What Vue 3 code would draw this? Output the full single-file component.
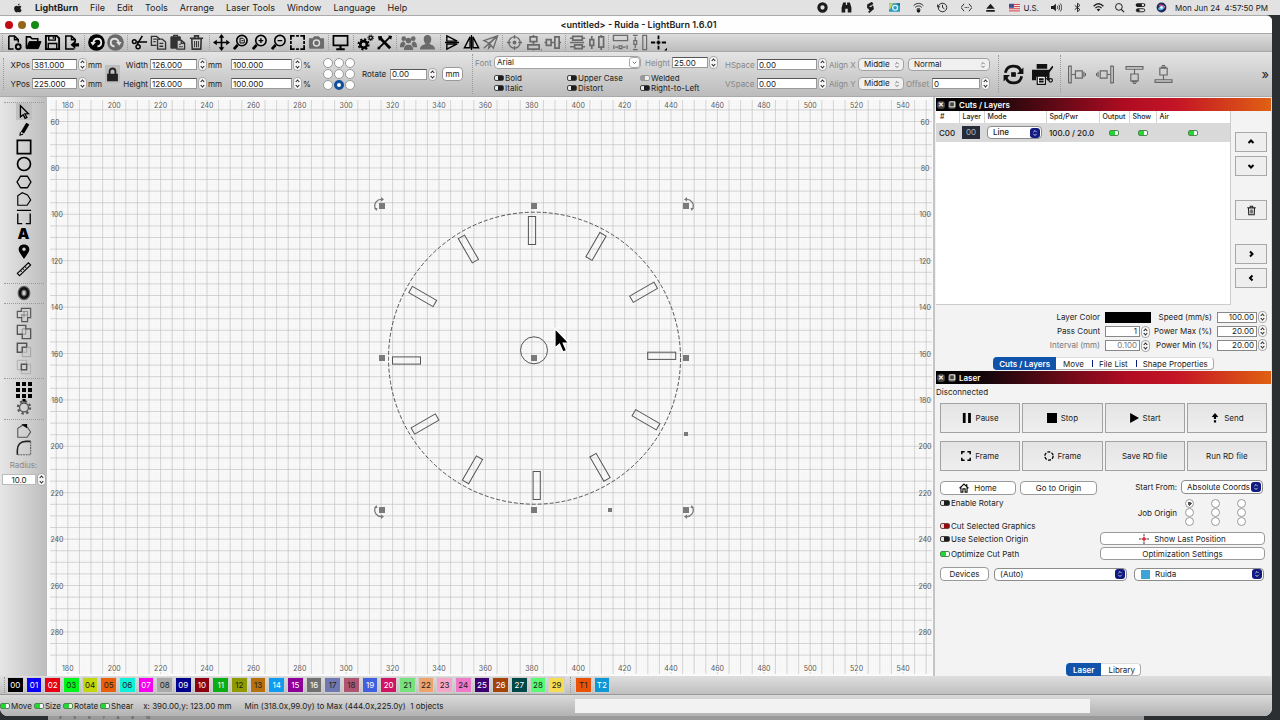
<script setup>
import { ref } from 'vue'

const menus = ['File', 'Edit', 'Tools', 'Arrange', 'Laser Tools', 'Window', 'Language', 'Help']

const icons = {
  newFile: '<path d="M3 2h6l4 4v3M3 2v14h5M9 2v4h4" stroke-width="1.6"/><circle cx="13" cy="13.5" r="2.6" stroke-width="2"/>',
  open: '<path d="M1.5 15V3h4l2 2h6v3" stroke-width="1.7"/><path d="M1.5 15.5 4.5 8H17l-3 7.500z" fill="currentColor"/>',
  save: '<path d="M2 2h11.500l2.500 2.500V16H2z" stroke-width="2"/><path d="M5 2v4.500h7V2M4.500 16v-6h9v6" stroke-width="1.500"/><path d="M10 3v2" stroke-width="1.500"/>',
  exportFile: '<path d="M12 16H3V2h6l4 4v3M9 2v4h4" stroke-width="1.6"/><path d="M17 9.800h-4V7l-5 4.500 5 4.500v-2.800h4z" fill="currentColor" stroke="none"/>',
  undo: '<circle cx="9" cy="9" r="8.800" fill="currentColor" stroke="none"/><path d="M5.500 9.500c.5-3 2.200-4.500 4.500-4.500 2.400 0 4 1.800 4 4s-1.500 4-4 4" stroke="#e6e6e6" stroke-width="2"/><path d="M2.500 8.500h6L5 12.500z" fill="#e6e6e6" stroke="none"/>',
  redo: '<circle cx="9" cy="9" r="8.800" fill="currentColor" stroke="none"/><path d="M12.500 9.500c-.5-3-2.200-4.500-4.500-4.500-2.400 0-4 1.800-4 4s1.500 4 4 4" stroke="#ddd" stroke-width="2"/><path d="M15.500 8.500h-6l3.500 4z" fill="#ddd" stroke="none"/>',
  cut: '<path d="M17 8.500H6M12 2 6.500 11" stroke-width="1.700"/><circle cx="3.500" cy="8" r="2" stroke-width="1.500"/><circle cx="7.500" cy="13.500" r="2.200" stroke-width="1.500"/>',
  copy: '<path d="M7 12H1.500V2.500H7L10 5v1" stroke-width="1.500"/><path d="M8 5.500h5l3.500 3V16H8zM3.500 5.500H7M3.500 8H6M10 10h4M10 13h4" stroke-width="1.400"/>',
  paste: '<path d="M2 3h10v3H8v9H2z" fill="currentColor"/><path d="M5 3V1.500h4V3M8.500 6.500H13l3.500 3V16h-8zM13 6.500v3.500h3.500" stroke-width="1.400"/><path d="M10.500 11h2M10.500 13.500h4" />',
  trash: '<path d="M4 5h10l-.5 11h-9zM2 4.500h14M7 4V2h4v2" stroke-width="1.700"/><path d="M7 7.500v6.500M9 7.500v6.500M11 7.500v6.500" stroke-width="1.100"/>',
  move: '<path d="M9 3v12M3 9h12" stroke-width="1.800"/><path d="M9 0l3 4H6zM9 18l3-4H6zM0 9l4-3v6zM18 9l-4-3v6z" fill="currentColor" stroke="none"/>',
  zoomFit: '<circle cx="10.500" cy="7" r="5.500" stroke-width="1.700"/><path d="M6 11.500 2 16" stroke-width="3"/><path d="M8.500 4.500h3l1.500 1.500v3.500H8.500zM10 7h2"/>',
  zoomIn: '<circle cx="10.500" cy="7" r="5.500" stroke-width="1.700"/><path d="M6 11.500 2 16" stroke-width="3"/><path d="M8 7h5M10.500 4.500v5" stroke-width="1.500"/>',
  zoomOut: '<circle cx="10.500" cy="7" r="5.500" stroke-width="1.700"/><path d="M6 11.500 2 16" stroke-width="3"/><path d="M8 7h5" stroke-width="1.500"/>',
  marquee: '<path d="M2 6V2h4M12 2h4v4M16 12v4h-4M6 16H2v-4M7.500 2h3M7.500 16h3M2 7.500v3M16 7.500v3" stroke-width="1.900"/>',
  camera: '<path d="M1.500 5H5l1.500-2h5L13 5h3.500v10h-15z" fill="currentColor"/><circle cx="9" cy="9.500" r="3.200" stroke="#ddd" stroke-width="1.500"/>',
  monitor: '<path d="M1.500 2h15v10h-15z" stroke-width="1.800"/><path d="M9 12v3M4.500 16.200h9" stroke-width="2.200"/>',
  gears: '<circle cx="7" cy="11" r="3.500" stroke-width="2.800"/><circle cx="7" cy="11" r="5.500" stroke-width="1.800" stroke-dasharray="2.300 2"/><circle cx="14.500" cy="4" r="1.800" stroke-width="1.400"/><circle cx="14.500" cy="4" r="3" stroke-dasharray="1.200 1.100" stroke-width="1"/>',
  tools: '<path d="M4 4l11 11" stroke-width="3"/><path d="M15.500 2.500 3 15" stroke-width="1.900"/><path d="M2 2.500 6 2l1 4-4 1zM13 1.500l4 .5-1 4-2-2zM2 13l3 3-3.500.5z" fill="currentColor" stroke="none"/>',
  group: '<g fill="currentColor" stroke="none"><circle cx="4" cy="5" r="2.500"/><circle cx="14" cy="5" r="2.500"/><circle cx="9" cy="7" r="3"/><path d="M0 13c0-3 1.500-5 4-5l2 2-2 4H0zM18 13c0-3-1.500-5-4-5l-2 2 2 4h4zM4 17c0-4 2-6 5-6s5 2 5 6z"/></g><path d="M6 10c1 1 5 1 6 0" stroke="#ccc" stroke-width=".7"/>',
  user: '<path d="M9 1c3 0 4 2 4 4.500 0 2-1 4-2 5 2 1 6 1.500 6 6H1c0-4.500 4-5 6-6-1-1-2-3-2-5C5 3 6 1 9 1z" fill="currentColor" stroke="none"/>',
  flipV: '<path d="M3 2l11 5.500H3zM3 16l11-5.500H3z" stroke-width="1.500"/><path d="M1 9h15" stroke-width="1.500"/>',
  flipH: '<path d="M7.500 3v11.500H1.500zM10.500 3v11.500h6z" stroke-width="1.500"/><path d="M9 1v16" stroke-width="1.300"/>',
  plane: '<path d="M2 7 16.500 2 12 15 8 10zM8 10l8.500-8M2 15 15 3M8 10l-1 5 2.500-2.500" stroke-width="1.400"/>',
  target: '<circle cx="9" cy="9" r="6" stroke-width="1.400"/><circle cx="9" cy="9" r="2" fill="currentColor" stroke="none"/><path d="M9 1v4M9 13v4M1 9h4M13 9h4" stroke-width="1.400"/>',
  alignV: '<path d="M5.500 3h7v5h-7zM3 11.500h12V16H3zM9 1v2M9 8v3M9 16v1.500" stroke-width="1.800"/><path d="M16 17.500h2v-2z" fill="currentColor" stroke="none"/>',
  alignH: '<path d="M2.500 6h5v6h-5zM11.500 3H16v12h-4.500zM.500 9h2M7.500 9h4M16 9h2" stroke-width="1.800"/>',
  distV: '<path d="M4 2.500h10v4H4zM6 11.500h8v4H6zM1 4.500h3M14 4.500h3M1 9h15M1 13.500h5M14 13.500h3" stroke-width="1.800"/>',
  distH: '<path d="M2 6h4v6H2zM11.500 3h5v11h-5zM4 2v4M4 12v4M14 1v2M14 14v3" stroke-width="1.800"/>',
  sizeW: '<path d="M1.500 1.500h15V7h-15z" stroke-width="1.400"/><path d="M2 12v4M16 12v4M3.500 14h3M11.500 14h3M7.500 12.500h3v3h-3z" stroke-width="1.300"/>',
  sizeH: '<path d="M12.500 1.500h4v15h-4z" stroke-width="1.300"/><path d="M2 1.500h5M2 16.500h5M4.500 3v3.500M4.500 11.500V15M3 7h3v4H3z" stroke-width="1.300"/>',
  cross: '<path d="M9 1.500v4M9 12.500v4M1 9h4.500M12.500 9H17M7 9h4M9 7v4" stroke-width="1.900"/><path d="M15 17.500h3v-3z" fill="currentColor" stroke="none"/>',
  pointer: '<path d="M5 2l9 9-4 .2 2.200 4-2 1-2-4.200L5 14.500z" stroke-width="1.500"/>',
  pencil: '<path d="M11.500 2 15 4 9 14l-3.500-2z" fill="currentColor" stroke="none"/><path d="M5 12.500 4.500 16 8 14.500" stroke-width="1.200"/>',
  rect: '<path d="M1.500 1.500h15v15h-15z" stroke-width="1.900"/>',
  ellipse: '<circle cx="9" cy="9" r="7.300" stroke-width="1.900"/>',
  hexagon: '<path d="M5.200 2.500h7.600l4 6.500-4 6.500H5.200L1.200 9z" stroke-width="1.500"/>',
  polygon: '<path d="M2 16V5.500L7 2l6 2.500L16.500 10l-4 6z" stroke-width="1.300"/>',
  tabs: '<path d="M1 1.500h16M2 5v11.500h5M11 16.500h5V5" stroke-width="1.500"/>',
  pin: '<path d="M9 .5c4 0 6 2.500 6 5.500 0 3.500-3.500 6.500-6 11-2.500-4.500-6-7.500-6-11C3 3 5 .5 9 .5zm0 3.500a2 2 0 1 0 0 4 2 2 0 0 0 0-4z" fill="currentColor" stroke="none"/>',
  ruler: '<path d="M1.500 14 14 2l2.500 2.500L4 16.500zM5 10.500l1.500 1.500M7.500 8.200 9 9.700M10 6l1.500 1.500" stroke-width="1.200"/>',
  offset: '<ellipse cx="9" cy="9" rx="4.500" ry="5.300" stroke-width="5.500" stroke="#666"/><ellipse cx="9" cy="9" rx="4.500" ry="5.300" stroke-width="2.800" stroke="#111"/>',
  union: '<path d="M1.500 5H6V1.500h10.500V12H13v4.500H6.500V12h-5z" stroke-width="1.300"/><path d="M7 5h6v6M6.500 12V8M9 5v7M6 9h7" stroke-width=".6"/>',
  merge: '<path d="M1.500 1.500H11v4h5.500v11H7v-5H1.500z" stroke-width="1.500"/><path d="M7 11.500v-6h4v6z" stroke-width=".6"/>',
  subtract: '<path d="M1.500 1.500H12V6H7v5.500H1.500z" stroke-width="1.700"/><path d="M12 6h4.500v10.500H7v-5h5z" stroke="#999" stroke-width=".9"/>',
  intersect: '<path d="M1.500 1.500h10.500v10.500H1.500zM6 6h10.500v10.500H6z" stroke="#aaa" stroke-width="1"/><path d="M6 6h6v6H6z" stroke-width="1.600"/>',
  gridArray: '<g fill="currentColor" stroke="none"><path d="M0 0h4.500v4.500H0zM6.750 0h4.500v4.500h-4.500zM13.500 0H18v4.500h-4.500zM0 6.750h4.500v4.500H0zM6.750 6.750h4.500v4.500h-4.500zM13.500 6.750H18v4.500h-4.500zM0 13.500h4.500V18H0zM6.750 13.500h4.500V18h-4.500zM13.500 13.500H18V18h-4.500z"/></g>',
  circArray: '<circle cx="9" cy="9.500" r="5" stroke-width="1.500"/><circle cx="9" cy="9.500" r="6.900" stroke-width="2.400" stroke-dasharray="2.600 2.820"/><path d="M9 0v3" stroke="#000" stroke-width="3.500"/>',
  startPoint: '<path d="M2 16V6l5.500-3.500L13 5l3.500 5-4 6z" stroke-width="1.200"/><path d="M6 1.500 12.500 1v5z" fill="#000" stroke="none"/>',
  radiusTool: '<path d="M1.500 16.500v-5c0-6 3.500-10 9.500-10h5.500" stroke-width="1.800" stroke="#222"/><path d="M16.500 2v14.500H2" stroke-width="1.200" stroke-dasharray="2 1"/>',
  lock: '<path d="M2.500 8h13v9h-13z" fill="currentColor" stroke="none"/><path d="M5.500 9V5.500c0-5 7-5 7 0V9" stroke-width="2.200"/>',
  cycle: '<path d="M2 7.500C3.500 0 13.500 0 15.500 6.500M16 10.500c-1.500 7.500-11.500 7.500-13.500 1" stroke-width="2.400"/><path d="M17.500 3v5.500H12zM.500 15V9.500H6z" fill="currentColor" stroke="none"/><path d="M7.500 7.500h3v3h-3z" fill="currentColor"/>',
  printer: '<path d="M4 0h9v4H4zM0 5h15v8h-2v-2H3.500v3H0z" fill="currentColor" stroke="none"/><path d="M4.500 10.500h7v7h-7z" fill="#eee"/><path d="M6 13h4M6 15h4M11 11l7-9M12.500 12l2 2" stroke-width="1.600"/><circle cx="16" cy="14" r="1.500"/>',
  dockL: '<path d="M1.500 1v16M1.500 1H4v16H1.500M8 5.500h6.500v7H8zM4 9h4M16 6.500v5M17.500 7.500v3" stroke-width="1.100"/>',
  dockR: '<path d="M16.500 1v16M16.500 1H14v16h2.500M4 5.500h6.500v7H4zM10 9h4M2 6.500v5M.500 7.500v3" stroke-width="1.100"/>',
  dockT: '<path d="M1 1.500h16V4H1zM5.500 8.500h7V15h-7zM9 4v4.500M6.500 16h5M7.500 17.500h3" stroke-width="1.100"/>',
  dockB: '<path d="M1 16.500h16V14H1zM5.500 3h7v6.500h-7zM9 9.500V14M6.500 2h5M7.500.500h3" stroke-width="1.100"/>',
  chevUp: '<path d="M6.500 10 9 7.500l2.500 2.500" stroke-width="2"/>',
  chevDown: '<path d="M6.500 8 9 10.500 11.500 8" stroke-width="2"/>',
  chevRight: '<path d="M8 6.500 10.500 9 8 11.500" stroke-width="2"/>',
  chevLeft: '<path d="M10.500 6.500 8 9l2.500 2.500" stroke-width="2"/>',
  pause: '<path d="M4 0v18M13.500 0v18" stroke-width="5"/>',
  stop: '<path d="M0 0h18v18H0z" fill="currentColor" stroke="none"/>',
  start: '<path d="M2 0l16 9-16 9z" fill="currentColor" stroke="none"/>',
  send: '<path d="M9 0l6 7H3z" fill="currentColor" stroke="none"/><path d="M9 5v6M9 13v4" stroke-width="4"/>',
  frameSq: '<path d="M1.500 6V1.500h5M11.500 1.500h5V6M16.500 12v4.500h-5M6.500 16.500h-5V12" stroke-width="2.700"/>',
  frameCirc: '<circle cx="9" cy="9" r="7.500" stroke-width="2.400" stroke-dasharray="5.500 2.350"/>',
  home: '<path d="M1 9.500 9 2l8 7.500M3.500 8v8.500h3.500v-6h4v6h3.500V8M14 2v4" stroke-width="2"/>',
  crosshair: '<path d="M9 0v4M9 14v4M0 9h4M14 9h4" stroke-width="1.500"/><path d="M9 5v8M5 9h8" stroke="#e0102a" stroke-width="2.500"/>',
  arrows: '<path d="M6 7.500 9 4.500l3 3M6 10.500l3 3 3-3" stroke-width="1.400"/>',
  drop: '<path d="M5.500 7.500 9 11l3.500-3.500" stroke-width="1.700"/>',
  apple: '<path d="M12 1c0 2-1.500 3.500-3.200 3.500C8.600 2.800 10.200 1.200 12 1zM6.200 5c1.200 0 1.800.8 2.900.8S11 5 12.200 5c1.200 0 2.300.7 3 1.700-2.600 1.600-2.200 5 .4 6.200-.8 2-2.200 4.100-3.600 4.100-1.100 0-1.500-.7-2.800-.7s-1.800.7-2.900.7C4.200 17 2 12.800 2 9.800 2 6.800 4 5 6.200 5z" fill="currentColor" stroke="none"/>',
  record: '<circle cx="9" cy="9" r="6" stroke-width="5"/>',
  binoculars: '<path d="M1 17V9L3.500 1H8v4h2V1h4.500L17 9v8h-6v-6H7v6z" fill="currentColor" stroke="none"/>',
  bolt: '<path d="M12 1 5 5v4l5 1-4 2M12 6l1 5-7 6M13 2 6 6" stroke-width="3"/>',
  photo: '<path d="M0 2h18v14H0z" fill="#2a9bc0" stroke="none"/><path d="M0 2h7L2 12H0z" fill="#b8d56a" stroke="none"/><circle cx="10" cy="9.500" r="4" stroke="#e8f5fa" stroke-width="2"/><path d="M12 2h6v4z" fill="#235f91" stroke="none"/>',
  wifiDot: '<path d="M1 6c5-5 11-5 16 0M3.500 9c3-3.500 8-3.500 11 0M6 12c1.500-2 4.500-2 6 0" stroke-width="1.500"/><circle cx="9" cy="14.500" r="3" fill="currentColor" stroke="none"/>',
  clock: '<circle cx="9" cy="9" r="7" stroke-width="1.500"/><path d="M9 4.500V9l3 2M1 4v4h4" stroke-width="1.500"/>',
  code: '<path d="M5 3 0 9l5 6M13 3l5 6-5 6M6 9h1.500M8.500 9H10M11 9h1.500" stroke-width="1.500"/>',
  eject: '<path d="M9 3l7 8H2zM2 13h14v3H2z" fill="currentColor" stroke="none"/>',
  flag: '<path d="M0 3h18v12H0z" fill="#f1e4e4" stroke="none"/><path d="M0 4h18M0 7.500h18M0 11h18M0 14.500h18" stroke="#d33f49" stroke-width="1.600"/><path d="M0 3h8v6.500H0z" fill="#3b4c8f" stroke="none"/>',
  volume: '<path d="M0 6.500h3.500L8 3v12l-4.500-3.500H0z" fill="currentColor" stroke="none"/><path d="M10 6.500c1.200 1.500 1.200 3.500 0 5M12.500 4.500c2.300 2.500 2.300 6.500 0 9M15 2.500c3.500 4 3.500 9 0 13" stroke-width="1.500"/>',
  bluetooth: '<path d="M4.500 5.500l8.500 7L9 16V2l4 3.500-8.500 7" stroke-width="1.500"/>',
  wifi: '<path d="M1 7c5-5 11-5 16 0M4 10c3-3 7-3 10 0" stroke-width="2.200"/><path d="M6 12c2-1.500 4-1.500 6 0l-3 3.500z" fill="currentColor" stroke="none"/>',
  search: '<circle cx="8" cy="8" r="5.500" stroke-width="1.600"/><path d="M12 12l4.500 4.500" stroke-width="2"/>',
  control: '<rect x="1" y="2" width="16" height="6" rx="3" fill="currentColor" stroke="none"/><rect x="2" y="11" width="14" height="5" rx="2.500" stroke-width="1.500"/><circle cx="13" cy="5" r="2" fill="#ddd" stroke="none"/><circle cx="5" cy="13.500" r="2.500" fill="currentColor" stroke="none"/>',
  siri: '<circle cx="9" cy="9" r="8" fill="#27265c" stroke="none"/><path d="M3 12c3-7 8-8 12-5-2 5-6 8-10 6z" fill="#4fb6dd" stroke="none"/><path d="M5 6c3-2 6-1 9 4" stroke="#e2508e" stroke-width="2"/><circle cx="9" cy="9" r="2" fill="#fff" stroke="none"/>',
}

const toolGroups = [
  [['newFile', 'New'], ['open', 'Open'], ['save', 'Save'], ['exportFile', 'Import']],
  [['undo', 'Undo'], ['redo', 'Redo', 2]],
  [['cut', 'Cut'], ['copy', 'Copy', 1], ['paste', 'Paste', 1], ['trash', 'Delete', 1]],
  [['move', 'Pan'], ['zoomFit', 'Zoom to page'], ['zoomIn', 'Zoom in'], ['zoomOut', 'Zoom out'], ['marquee', 'Frame selection'], ['camera', 'Capture', 2]],
  [['monitor', 'Preview']],
  [['gears', 'Settings'], ['tools', 'Device settings']],
  [['group', 'Group', 2], ['user', 'Ungroup', 2]],
  [['flipV', 'Flip vertically'], ['flipH', 'Flip horizontally'], ['plane', 'Mirror', 2]],
  [['target', 'Center', 2], ['alignV', 'Align vertical centers', 2], ['alignH', 'Align horizontal centers', 2]],
  [['distV', 'Distribute vertically', 2], ['distH', 'Distribute horizontally', 2]],
  [['sizeW', 'Match width', 2], ['sizeH', 'Match height', 2], ['cross', 'Move laser to position']],
]

const sideGroups = [
  [['pointer', 'Select'], ['pencil', 'Draw lines'], ['rect', 'Rectangle'], ['ellipse', 'Ellipse'], ['hexagon', 'Polygon'], ['polygon', 'Edit nodes'], ['tabs', 'Tabs'], ['text', 'Text'], ['pin', 'Position laser'], ['ruler', 'Measure']],
  [['offset', 'Offset']],
  [['union', 'Weld', 1], ['merge', 'Union', 1], ['subtract', 'Subtract', 1], ['intersect', 'Intersect', 1]],
  [['gridArray', 'Grid array'], ['circArray', 'Circular array', 1]],
  [['startPoint', 'Start point', 1], ['radiusTool', 'Radius', 1]],
]

const statusIcons = ['record', 'binoculars', 'bolt', 'photo', 'wifiDot', 'clock', 'code', 'eject']
const systemIcons = ['volume', 'bluetooth', 'wifi', 'search', 'control', 'siri']

const textOpts = ['Bold', 'Upper Case', 'Welded', 'Italic', 'Distort', 'Right-to-Left']

// Workspace scale: 20 mm spans 46.4 units of the drawing.
const step = 11.6
const vLines = Array.from({ length: 76 }, (_, i) => 56.2 + i * step).filter(x => x < 932)
const hLines = Array.from({ length: 48 }, (_, i) => 109.9 + i * step).filter(y => y < 674)
const xLabels = Array.from({ length: 19 }, (_, i) => ({ v: 180 + i * 20, p: 67.8 + i * 46.4 }))
const yLabels = Array.from({ length: 12 }, (_, i) => ({ v: 60 + i * 20, p: 121.5 + i * 46.4 }))

const marks = [
  [532, 230.5, 0], [596, 246.4, 30], [643.6, 292.2, 60], [661.7, 355.8, 90], [646, 419.8, 120], [600, 467.3, 150],
  [536.7, 485.5, 0], [472.5, 469.8, 30], [425, 424, 60], [406.5, 360.5, 90], [422.7, 296.5, 120], [468.4, 249, 150],
]
const handles = [[382, 206], [534, 206], [686, 206], [382, 358], [534, 358], [686, 358], [382, 510], [534, 510], [686, 510]]
const turns = [[382, 206, 1, 1], [686, 206, -1, 1], [382, 510, 1, -1], [686, 510, -1, -1]]

const palette = [
  ['00', '#000', 1], ['01', '#0a00f5', 1], ['02', '#e60012', 1], ['03', '#00f51a', 0], ['04', '#c3d70d', 0], ['05', '#ea5f0a', 0], ['06', '#0ff0d8', 0],
  ['07', '#f500f0', 1], ['08', '#a9a9a9', 0], ['09', '#00008c', 1], ['10', '#8c0010', 1], ['11', '#0aae14', 1], ['12', '#8f9a00', 0], ['13', '#b7700c', 0],
  ['14', '#0f9cf0', 1], ['15', '#8c0098', 1], ['16', '#707070', 1], ['17', '#7078b4', 0], ['18', '#ad5570', 0], ['19', '#4060e0', 1], ['20', '#d01464', 1],
  ['21', '#78e07c', 0], ['22', '#eda36c', 0], ['23', '#f5a5c8', 0], ['24', '#f078c8', 0], ['25', '#3c0070', 1], ['26', '#a54208', 1], ['27', '#004848', 1],
  ['28', '#58fa74', 0], ['29', '#f5dc50', 0],
]
const toolLayers = [['T1', '#ea5208', 0], ['T2', '#0d97d4', 1]]

const anchor = ref(7)
const job = ref(0)
</script>

<template>
  <div class="screen">
    <header class="menubar">
      <nav class="menus">
        <a href="#" class="apple" aria-label="Apple menu"><svg viewBox="0 0 18 18" v-html="icons.apple"></svg></a>
        <a href="#" class="app">LightBurn</a>
        <a v-for="m in menus" :key="m" href="#">{{ m }}</a>
      </nav>
      <div class="status-area">
        <span v-for="n in statusIcons" :key="n" class="st"><svg viewBox="0 0 18 18" v-html="icons[n]"></svg></span>
        <span class="lang"><svg viewBox="0 0 18 18" v-html="icons.flag"></svg>U.S.</span>
        <span v-for="n in systemIcons" :key="n" class="sy"><svg viewBox="0 0 18 18" v-html="icons[n]"></svg></span>
        <span class="clock">Mon Jun 24&nbsp; 4:57:50 PM</span>
      </div>
    </header>

    <main class="window">
      <div class="titlebar">
        <div class="lights">
          <button aria-label="Close" class="red"></button><button aria-label="Minimize" class="amber"></button><button aria-label="Zoom" class="green"></button>
        </div>
        <h1>&lt;untitled&gt; - Ruida - LightBurn 1.6.01</h1>
      </div>

      <div class="toolbar">
        <div v-for="(g, i) in toolGroups" :key="i" class="tgroup">
          <button v-for="t in g" :key="t[0]" :aria-label="t[1]" :class="['tool', t[2] === 2 ? 'dim' : t[2] === 1 ? 'soft' : '']">
            <svg viewBox="0 0 18 18" v-html="icons[t[0]]"></svg>
          </button>
        </div>
      </div>

      <div class="props">
        <div class="pos">
          <label for="xpos">XPos</label><input id="xpos" value="381.000"><i class="step"></i><span>mm</span>
          <label for="ypos">YPos</label><input id="ypos" value="225.000"><i class="step"></i><span>mm</span>
        </div>
        <button class="lock" aria-label="Lock aspect ratio"><svg viewBox="0 0 18 18" v-html="icons.lock"></svg></button>
        <div class="size">
          <label for="w">Width</label><input id="w" value="126.000"><i class="step"></i><span>mm</span><input aria-label="Width percent" value="100.000"><i class="step"></i><span>%</span>
          <label for="h">Height</label><input id="h" value="126.000"><i class="step"></i><span>mm</span><input aria-label="Height percent" value="100.000"><i class="step"></i><span>%</span>
        </div>
        <div class="anchors">
          <input v-for="n in 9" :key="n" v-model="anchor" type="radio" name="anchor" :value="n - 1" :aria-label="'Anchor ' + n">
        </div>
        <div class="rotate">
          <label for="rot">Rotate</label><input id="rot" value="0.00"><i class="step"></i><button class="unit">mm</button>
        </div>
        <div class="font">
          <div class="fontrow">
            <label for="font">Font</label>
            <span class="sel wide"><select id="font"><option>Arial</option></select><svg class="boxed" viewBox="0 0 18 18" v-html="icons.drop"></svg></span>
            <label for="fh">Height</label><input id="fh" value="25.00"><i class="step"></i>
          </div>
          <div class="opts">
            <label v-for="o in textOpts" :key="o"><input type="checkbox" class="tg" :class="{ pale: o === 'Welded' }">{{ o }}</label>
          </div>
        </div>
        <div class="spacing">
          <label for="hs">HSpace</label><input id="hs" value="0.00"><i class="step"></i>
          <label for="ax">Align X</label><span class="sel"><select id="ax"><option>Middle</option></select><svg viewBox="0 0 18 18" v-html="icons.arrows"></svg></span>
          <span class="sel normal"><select aria-label="Text mode"><option>Normal</option></select><svg viewBox="0 0 18 18" v-html="icons.arrows"></svg></span>
          <label for="vs">VSpace</label><input id="vs" value="0.00"><i class="step"></i>
          <label for="ay">Align Y</label><span class="sel"><select id="ay"><option>Middle</option></select><svg viewBox="0 0 18 18" v-html="icons.arrows"></svg></span>
          <span class="offset"><label for="off">Offset</label><input id="off" value="0"><i class="step"></i></span>
        </div>
        <div class="big">
          <button aria-label="Refresh"><svg viewBox="0 0 18 18" v-html="icons.cycle"></svg></button>
          <button aria-label="Print and cut"><svg viewBox="0 0 18 18" v-html="icons.printer"></svg></button>
        </div>
        <div class="big docks">
          <button v-for="d in ['dockL', 'dockR', 'dockT', 'dockB']" :key="d" :aria-label="d"><svg viewBox="0 0 18 18" v-html="icons[d]"></svg></button>
        </div>
        <button class="more" aria-label="More">»</button>
      </div>

      <div class="body">
        <aside class="side">
          <div v-for="(g, i) in sideGroups" :key="i" class="sgroup">
            <button v-for="t in g" :key="t[0]" :aria-label="t[1]" :class="['tool', { soft: t[2], active: t[0] === 'pointer' }]">
              <b v-if="t[0] === 'text'">A</b>
              <svg v-else viewBox="0 0 18 18" v-html="icons[t[0]]"></svg>
            </button>
          </div>
          <label for="radius">Radius:</label>
          <div class="radius"><input id="radius" value="10.0"><i class="step"></i></div>
        </aside>

        <section class="canvas" aria-label="Workspace">
          <svg viewBox="47 97 886 579">
            <defs>
              <pattern id="fine" width="2.32" height="2.32" patternUnits="userSpaceOnUse" x="56.2" y="109.900">
                <path d="M0 0H2.320M0 0V2.320" class="fine" />
              </pattern>
            </defs>
            <rect x="50" y="100" width="882" height="574" fill="url(#fine)" stroke="none" />
            <line v-for="x in vLines" :key="'v' + x" :x1="x" :x2="x" y1="100" y2="674" class="grid" />
            <line v-for="y in hLines" :key="'h' + y" x1="50" x2="932" :y1="y" :y2="y" class="grid" />
            <g class="ticks">
              <g v-for="l in xLabels" :key="'x' + l.v">
                <rect :x="l.p - 6" y="102" width="12" height="7" /><text :x="l.p" y="108">{{ l.v }}</text>
                <rect :x="l.p - 6" y="665" width="12" height="7" /><text :x="l.p" y="671">{{ l.v }}</text>
              </g>
              <g v-for="l in yLabels" :key="'y' + l.v">
                <text :x="l.v < 100 ? 55 : 57" :y="l.p + 3">{{ l.v }}</text>
                <text x="925" :y="l.p + 3">{{ l.v }}</text>
              </g>
            </g>
            <g class="art">
              <circle cx="534.5" cy="358.2" r="146" stroke-dasharray="4 2" />
              <circle cx="534" cy="350.300" r="13.500" />
              <rect v-for="(m, i) in marks" :key="i" :x="m[0] - 3.600" :y="m[1] - 14" width="7.200" height="28" :transform="`rotate(${m[2]} ${m[0]} ${m[1]})`" />
            </g>
            <g class="handles">
              <rect v-for="(p, i) in handles" :key="i" :x="p[0] - 3" :y="p[1] - 3" width="6" height="6" />
              <rect x="684" y="432" width="4" height="4" /><rect x="608" y="508" width="4" height="4" />
              <g v-for="(t, i) in turns" :key="'t' + i" :transform="`translate(${t[0]} ${t[1]}) scale(${t[2]} ${t[3]})`">
                <path d="M-6.500 3C-9-2-5-7 0-6.500" class="turn" /><path d="M-1-9l3 2.500-3 2zM-8 2h3.500l-1 3z" />
              </g>
            </g>
            <path class="cursor" d="M555 328.500v19.500l4.500-4 3.500 8 3.500-1.500-3.300-7.500h5.800z" />
          </svg>
        </section>

        <aside class="dock">
          <section class="panel cuts">
            <h2><button aria-label="Close panel">✕</button><button aria-label="Float panel">❐</button>Cuts / Layers</h2>
            <div class="layers">
              <div class="list">
                <table>
                  <colgroup><col class="c1"><col class="c2"><col class="c3"><col class="c4"><col class="c5"><col class="c6"><col></colgroup>
                  <thead><tr><th>#</th><th>Layer</th><th>Mode</th><th>Spd/Pwr</th><th>Output</th><th>Show</th><th>Air</th></tr></thead>
                  <tbody>
                    <tr>
                      <td>C00</td><td><span class="swatch">00</span></td>
                      <td><span class="sel blue"><select aria-label="Mode"><option>Line</option></select><svg viewBox="0 0 18 18" v-html="icons.arrows"></svg></span></td>
                      <td>100.0 / 20.0</td>
                      <td class="mid"><input type="checkbox" class="tg" checked aria-label="Output"></td>
                      <td class="mid"><input type="checkbox" class="tg" checked aria-label="Show"></td>
                      <td class="air"><input type="checkbox" class="tg" checked aria-label="Air"></td>
                    </tr>
                  </tbody>
                </table>
              </div>
              <div class="order">
                <div><button aria-label="Move up"><svg viewBox="0 0 18 18" v-html="icons.chevUp"></svg></button><button aria-label="Move down"><svg viewBox="0 0 18 18" v-html="icons.chevDown"></svg></button></div>
                <div><button aria-label="Delete layer" class="bin"><svg viewBox="0 0 18 18" v-html="icons.trash"></svg></button></div>
                <div><button aria-label="Next"><svg viewBox="0 0 18 18" v-html="icons.chevRight"></svg></button><button aria-label="Previous"><svg viewBox="0 0 18 18" v-html="icons.chevLeft"></svg></button></div>
              </div>
            </div>
            <div class="params">
              <span>Layer Color</span><button class="color" aria-label="Layer Color"></button>
              <label for="speed">Speed (mm/s)</label><input id="speed" value="100.00"><i class="step"></i>
              <label for="pass">Pass Count</label><span class="spin"><input id="pass" value="1"><i class="step"></i></span>
              <label for="pmax">Power Max (%)</label><input id="pmax" value="20.00"><i class="step"></i>
              <label for="int" class="off">Interval (mm)</label><span class="spin off"><input id="int" value="0.100" disabled><i class="step"></i></span>
              <label for="pmin">Power Min (%)</label><input id="pmin" value="20.00"><i class="step"></i>
            </div>
            <div class="tabs"><button class="on">Cuts / Layers</button><button>Move</button><button class="bar">File List</button><button class="bar">Shape Properties</button></div>
          </section>

          <section class="panel laser">
            <h2><button aria-label="Close panel">✕</button><button aria-label="Float panel">❐</button>Laser</h2>
            <p>Disconnected</p>
            <div class="jobs">
              <button><svg viewBox="0 0 18 18" v-html="icons.pause"></svg>Pause</button>
              <button><svg viewBox="0 0 18 18" v-html="icons.stop"></svg>Stop</button>
              <button><svg viewBox="0 0 18 18" v-html="icons.start"></svg>Start</button>
              <button><svg viewBox="0 0 18 18" v-html="icons.send"></svg>Send</button>
              <button><svg viewBox="0 0 18 18" v-html="icons.frameSq"></svg>Frame</button>
              <button><svg viewBox="0 0 18 18" v-html="icons.frameCirc"></svg>Frame</button>
              <button>Save RD file</button>
              <button>Run RD file</button>
            </div>
            <div class="origin">
              <div class="left">
                <div class="pair"><button class="pill"><svg viewBox="0 0 18 18" v-html="icons.home"></svg>Home</button><button class="pill">Go to Origin</button></div>
                <label class="r1"><input type="checkbox" class="tg">Enable Rotary</label>
                <label class="r2"><input type="checkbox" class="tg red">Cut Selected Graphics</label>
                <label class="r3"><input type="checkbox" class="tg">Use Selection Origin</label>
                <label class="r4"><input type="checkbox" class="tg" checked>Optimize Cut Path</label>
              </div>
              <div class="right">
                <div class="from"><label for="sf">Start From:</label><span class="sel blue"><select id="sf"><option>Absolute Coords</option></select><svg viewBox="0 0 18 18" v-html="icons.arrows"></svg></span></div>
                <div class="from"><span>Job Origin</span>
                  <div class="job"><input v-for="n in 9" :key="n" v-model="job" type="radio" name="job" :value="n - 1" :aria-label="'Job origin ' + n"></div>
                </div>
                <button class="pill"><svg viewBox="0 0 18 18" v-html="icons.crosshair"></svg>Show Last Position</button>
                <button class="pill">Optimization Settings</button>
              </div>
            </div>
            <div class="devices">
              <button class="pill">Devices</button>
              <span class="sel blue"><select aria-label="Port"><option>(Auto)</option></select><svg viewBox="0 0 18 18" v-html="icons.arrows"></svg></span>
              <span class="sel blue dev"><i class="chip"></i><select aria-label="Device"><option>Ruida</option></select><svg viewBox="0 0 18 18" v-html="icons.arrows"></svg></span>
            </div>
            <div class="tabs end"><button class="on">Laser</button><button>Library</button></div>
          </section>
        </aside>
      </div>

      <div class="palette">
        <div class="chips"><button v-for="c in palette" :key="c[0]" :class="{ light: c[2] }" :style="{ background: c[1] }">{{ c[0] }}</button></div>
        <div class="chips extra"><button v-for="c in toolLayers" :key="c[0]" :class="{ light: c[2] }" :style="{ background: c[1] }">{{ c[0] }}</button></div>
      </div>

      <footer class="statusbar">
        <label v-for="s in ['Move', 'Size', 'Rotate', 'Shear']" :key="s"><input type="checkbox" class="tg" checked>{{ s }}</label>
        <span class="xy">x: 390.00,y: 123.00 mm</span>
        <span class="bounds">Min (318.0x,99.0y) to Max (444.0x,225.0y)&nbsp; 1 objects</span>
        <span class="progress"></span>
      </footer>
    </main>
    <div class="behind"><span v-for="n in 7" :key="n">{{ n + 3 }}</span></div>
  </div>
</template>

<style>
html, body { background: #2b2f31; }
</style>

<style scoped>
.screen { min-height: 100vh; display: flex; flex-direction: column; background: #2b2f31; font: 8px/10px Inter, "Liberation Sans", sans-serif; color: #1c1c1c; }
.screen *, .screen *::before, .screen *::after { box-sizing: border-box; }
button, input, select { font: inherit; color: inherit; margin: 0; padding: 0; border: 0; background: none; min-width: 0; }
svg { fill: none; stroke: currentColor; display: block; }
a { color: inherit; text-decoration: none; }
h1, h2, p { margin: 0; font: inherit; }
label, span, button { white-space: nowrap; }

.menubar { height: 15px; background: #e3e2e3; display: flex; align-items: center; justify-content: space-between; font-size: 9px; padding: 0 12px 0 13px; }
.menus { display: flex; align-items: center; gap: 12px; }
.apple svg { width: 10px; height: 10px; }
.app { font-weight: 700; }
.status-area { display: flex; align-items: center; }
.status-area svg { width: 11px; height: 11px; }
.st { width: 24px; display: flex; justify-content: center; }
.sy { width: 21px; display: flex; justify-content: center; }
.lang { display: flex; align-items: center; gap: 3px; font-size: 8px; padding: 0 7px; }
.clock { padding-left: 3px; font-size: 8px; }

.window { flex: 1; display: flex; flex-direction: column; margin-right: 8px; border-radius: 0 6px 8px 8px; background: #f3f3f3; overflow: hidden; border-top: 1px solid #aaa; }
.titlebar { height: 18px; background: #fefefe; display: flex; align-items: center; border-bottom: 1px solid #a8a8a8; }
.lights { display: flex; gap: 5px; padding-left: 5px; flex: 1; }
.lights button { width: 8px; height: 8px; border-radius: 50%; }
.red { background: #c20a16; } .amber { background: #95651a; } .green { background: #128a14; }
.titlebar h1 { font-weight: 600; font-size: 9px; }
.titlebar::after { content: ""; flex: 1; }

.toolbar { height: 18px; display: flex; align-items: center; padding-left: 5px; background: linear-gradient(#dcdcdc, #bdbdbd); border-bottom: 1px solid #a9a9a9; }
.tgroup { display: flex; position: relative; margin-left: 5px; }
.tgroup:first-child { margin-left: 0; }
.tgroup:nth-child(even) { margin-left: 6px; }
.tgroup::before { content: ""; position: absolute; left: -3px; top: 1px; bottom: 1px; border-left: 1px dotted #999; }
.tool { width: 19px; height: 17px; display: flex; justify-content: center; align-items: center; color: #000; }
.tool svg { width: 17px; height: 17px; }
.tool.soft { color: #333; }
.tool.dim { color: #6a6a6a; }

.props { height: 45px; display: flex; align-items: center; background: linear-gradient(#e4e4e4, #bcbcbc); border-bottom: 1px solid #aaa; padding-left: 3px; color: #222; }
.props input:not([type]) { height: 11px; background: #fff; border: 1px solid #999; border-top-color: #555; padding: 0 1px; width: 100%; }
.pos, .size { display: grid; align-items: center; row-gap: 6px; column-gap: 1px; }
.pos { grid-template-columns: 26px 45px 9px 14px; border-left: 1px dotted #999; padding-left: 1px; }
.size { grid-template-columns: 26px 47px 9px 22px 61px 9px 8px; }
.pos label, .size label { text-align: right; padding-right: 1px; }
.step { position: relative; display: block; width: 9px; height: 13px; border: 1px solid #aaa; border-radius: 4px; background: #f6f6f6; }
.step::before, .step::after { content: ""; position: absolute; left: 2px; width: 3px; height: 3px; border: solid #222; }
.step::before { top: 2px; border-width: 1px 0 0 1px; transform: rotate(45deg); }
.step::after { bottom: 2px; border-width: 0 1px 1px 0; transform: rotate(45deg); }
.lock { width: 15px; height: 18px; margin: 0 3px 0 3px; background: #bebebe; display: flex; align-items: center; }
.lock svg { width: 15px; height: 17px; }
.anchors { display: grid; grid-template-columns: repeat(3, 10px); gap: 1px; margin-left: 12px; }
input[type="radio"] { appearance: none; width: 10px; height: 10px; border: 1px solid #999; border-radius: 50%; background: #fff; }
.anchors input:checked { border: 3px solid #12509c; }
.rotate { display: grid; grid-template-columns: 27px 37px 9px 20px; align-items: center; column-gap: 1px; margin-left: 7px; }
.rotate .unit { height: 14px; margin-left: 4px; width: 21px; background: #fff; border: 1px solid #999; border-radius: 4px; }
.font { margin-left: 14px; border-left: 1px dotted #999; padding-left: 2px; height: 40px; display: flex; flex-direction: column; }
.fontrow { display: grid; grid-template-columns: 18px 147px 29px 36px 9px; column-gap: 1px; align-items: center; color: #888; padding-top: 2px; }
.fontrow input { color: #222; }
.fontrow label:nth-of-type(2) { padding-left: 3px; }
.opts { display: grid; grid-template-columns: 73px 73px 70px; margin: 4px 0 0 19px; }
.opts label { display: flex; align-items: center; }
.tg { appearance: none; flex: none; width: 10px; height: 6px; margin-right: 1px; border: 1px solid #444; border-radius: 2px; background: linear-gradient(90deg, #e8e8e8 40%, #1c1c1c 40%); }
.tg.pale { background: linear-gradient(90deg, #999 50%, #eee 50%); border-color: #999; }
.tg.red { background: linear-gradient(90deg, #ead8d8 40%, #900a10 40%); border-color: #744; }
.tg:checked { background: linear-gradient(90deg, #22d832 60%, #fff 60%); border-color: #4a8a4c; }

.sel { position: relative; display: flex; align-items: center; height: 13px; border: 1px solid #a2a2a2; border-radius: 4px; background: #fbfbfb; color: #222; }
.sel select { appearance: none; width: 100%; height: 11px; padding: 0 12px 0 5px; line-height: 11px; outline: none; }
.sel svg { position: absolute; right: 1px; width: 10px; height: 10px; color: #555; pointer-events: none; }
.sel svg.boxed { width: 11px; height: 11px; right: 0; border: 1px solid #aaa; border-radius: 3px; }
.wide select { padding-left: 2px; }
.props .sel { background: #f0f0f0; }
.props .sel.wide { background: #fff; }
.sel.blue { background: #fff; border-color: #8c8c8c; }
.sel.blue svg { color: #fff; background: #101a80; border-radius: 3px; stroke-width: 2; }
.spacing { display: grid; grid-template-columns: 31px 60px 9px 29px 46px 85px; column-gap: 1px; row-gap: 6px; align-items: center; margin-left: 7px; color: #888; }
.spacing input, .fontrow input { border-color: #bbb; }
.normal { margin-left: 3px; }
.offset { display: grid; grid-template-columns: 25px 48px 9px; column-gap: 1px; align-items: center; padding-left: 1px; }
.spacing label:nth-of-type(even) { padding-left: 1px; }
.spacing input { color: #222; }
.big { display: flex; gap: 8px; margin-left: 8px; border-left: 1px dotted #999; padding-left: 4px; height: 38px; align-items: center; }
.big svg { width: 21px; height: 21px; color: #111; }
.docks { gap: 10px; padding-left: 6px; margin-left: 7px; }
.docks svg { width: 19px; height: 19px; color: #666; }
.more { margin-left: auto; margin-right: 3px; font-size: 13px; }

.body { flex: 1; display: flex; }
.side { width: 47px; padding-top: 5px; background: linear-gradient(90deg, #e6e6e6, #bdbdbd); display: flex; flex-direction: column; align-items: center; color: #888; }
.sgroup { display: flex; flex-direction: column; align-items: center; width: 40px; border-top: 1px dotted #999; padding: 0 0 2px; }
.side .tool { height: 17px; }
.side .tool:nth-child(even) { height: 18px; }
.sgroup:first-child { padding-bottom: 5px; }
.sgroup:nth-child(n+3) { padding-top: 2px; }
.sgroup:nth-child(4) { padding-bottom: 3px; }
.sgroup:last-of-type { padding-bottom: 0; }
.side .tool svg { width: 16px; height: 16px; }
.tool.active { background: #c0c0c0; width: 16px; }
.tool b { font-size: 15px; font-weight: 900; }
.side .soft { color: #555; }
.side > label { margin-top: 1px; }
.radius { display: flex; width: 100%; padding-left: 2px; gap: 1px; margin-top: 3px; align-items: center; }
.radius input { width: 34px; height: 11px; border: 1px solid #bbb; background: #fff; text-align: center; color: #222; }

.canvas { flex: 1; min-width: 0; background: #fafafa; border-right: 2px solid #c4c4c4; display: flex; overflow: hidden; }
.canvas > svg { width: 100%; height: 100%; flex: 1; }
.fine { stroke: #ececec; stroke-width: .5; }
.grid { stroke: #b8b8b8; stroke-width: .7; stroke-opacity: .8; }
.ticks text { font-size: 7px; fill: #555; stroke: none; text-anchor: middle; }
.ticks rect { fill: #fafafa; stroke: none; }
.art { stroke: #555; stroke-width: 1; }
.handles { fill: #7a7a7a; stroke: none; }
.turn { fill: none; stroke: #7a7a7a; stroke-width: 1.3; }
.cursor { fill: #000; stroke: #fff; stroke-width: 1.2; }

.dock { width: 337px; display: flex; flex-direction: column; background: #f3f3f3; padding-left: 1px; border-right: 1px solid #ddd; }
.panel { display: flex; flex-direction: column; }
.panel h2 { height: 13px; display: flex; align-items: center; gap: 3px; padding-left: 1px; color: #fff; font-weight: 600; background: linear-gradient(90deg, #000, #14060a 15%, #b00c22 57%, #c41526 72%, #e06012); }
.panel h2 button { width: 8px; height: 8px; line-height: 8px; border-radius: 3px; background: #444; color: #fff; font-size: 7px; }
.cuts { height: 273px; padding-top: 1px; }
.layers { display: flex; flex: 1; }
.list { flex: 1; background: #fff; border: solid #ccc; border-width: 0 1px 1px 0; }
table { width: 100%; border-collapse: collapse; table-layout: fixed; }
.c1 { width: 23px; } .c2 { width: 25px; } .c3 { width: 62px; } .c4 { width: 53px; } .c5 { width: 30px; } .c6 { width: 27px; }
th { font-weight: 500; font-size: 7px; text-align: left; height: 12px; padding: 0 0 0 3px; border-left: 1px solid #d4d4d4; line-height: 10px; white-space: nowrap; }
th:first-child { border-left: 0; padding-left: 4px; }
td { background: #d9d9d9; height: 19px; padding: 0 0 0 3px; white-space: nowrap; font-weight: 500; }
td .sel { width: 55px; }
td.mid, td.air { text-align: center; padding: 0; }
td .tg { vertical-align: middle; margin: 0; }
.swatch { display: block; width: 18px; height: 13px; line-height: 13px; background: #272b38; color: #a9b4c4; text-align: center; font-weight: 400; }
.order { width: 40px; padding: 21px 4px 0; display: flex; flex-direction: column; gap: 24px; }
.order div { display: flex; flex-direction: column; gap: 4px; }
.order button { height: 20px; border: 1px solid #a8a8a8; background: #eee; display: flex; align-items: center; justify-content: center; }
.order svg { width: 18px; height: 18px; color: #000; }
.order .bin svg { width: 11px; height: 11px; color: #222; }
.params { display: grid; grid-template-columns: 168px 46px 64px 40px 9px; column-gap: 1px; row-gap: 2px; padding: 6px 4px 6px 0; align-items: center; justify-items: end; }
.params input { width: 100%; height: 11px; border: 1px solid #888; background: #fff; text-align: right; padding-right: 2px; }
.params > * { height: 11px; line-height: 11px; }
.params > label, .params > span:first-child { padding-right: 4px; }
.params .step { height: 12px; }
.color { background: #000; width: 46px; }
.spin { display: grid; grid-template-columns: 35px 9px; column-gap: 1px; width: 45px; align-items: center; justify-self: start; }
.off { color: #777; }
.tabs { display: flex; justify-content: center; height: 13px; }
.tabs button { background: #fff; padding: 0 8px 0 7px; border-bottom: 1px solid #aaa; border-top: 1px solid #ddd; position: relative; }
.tabs .on { background: #0f53aa; color: #fff; font-weight: 600; border-radius: 4px 0 0 4px; padding: 0 6px; border-color: #0f53aa; }
.tabs button:last-child { border-radius: 0 4px 4px 0; border-right: 1px solid #aaa; padding-right: 5px; }
.tabs .bar::before { content: ""; position: absolute; left: 0; top: 2px; bottom: 2px; border-left: 1px solid #101a80; }

.laser { flex: 1; padding-top: 1px; }
.laser p { line-height: 10px; padding: 3px 0 6px; }
.jobs { display: grid; grid-template-columns: repeat(4, 1fr); gap: 8px 2px; padding: 0 4px; }
.jobs button { height: 30px; border: 1px solid #a2a2a2; background: linear-gradient(#e4e4e4, #efefef); display: flex; align-items: center; justify-content: center; gap: 4px; }
.jobs svg { width: 10px; height: 10px; color: #000; }
.pill { height: 14px; background: #fff; border: 1px solid #9a9a9a; border-radius: 4px; display: flex; align-items: center; justify-content: center; gap: 5px; }
.pill svg { width: 10px; height: 10px; color: #111; }
.origin { display: flex; justify-content: space-between; padding: 9px 6px 0 4px; }
.left, .right { display: flex; flex-direction: column; }
.left { width: 157px; }
.left label { display: flex; align-items: center; }
.pair { display: grid; grid-template-columns: 76px 77px; gap: 4px; padding-top: 1px; }
.r1 { margin-top: 3px; }
.r2 { margin-top: 13px; }
.r3 { margin-top: 3px; }
.r4 { margin-top: 5px; }
.right { width: 165px; }
.from { display: grid; grid-template-columns: 77px 82px; column-gap: 4px; align-items: center; text-align: right; }
.job { display: grid; grid-template-columns: repeat(3, 9px); justify-content: space-between; padding: 5px 17px 5px 4px; }
.job input { width: 9px; height: 9px; }
.job input:checked { background: radial-gradient(circle, #555 2px, #fff 2px); }
.right .pill { height: 13px; margin-top: 2px; }
.right .sel { height: 14px; }
.right .from + .pill { margin-top: 1px; }
.devices { display: grid; grid-template-columns: 49px 133px 132px; column-gap: 5px; padding: 7px 4px 0; align-items: center; }
.devices .sel:last-child { margin-left: 2px; }
.chip { width: 9px; height: 9px; background: #3aa5d6; margin-left: 6px; flex: none; }
.end { margin-top: auto; }
.end button:first-child { padding: 0 7px; }

.palette { height: 19px; display: flex; align-items: center; padding-left: 4px; background: linear-gradient(#dedede, #bfbfbf); border-bottom: 1px solid #999; }
.chips { display: grid; grid-template-columns: repeat(30, 1fr); gap: 2px; width: 561px; border-left: 1px dotted #999; padding-left: 2px; }
.chips button { height: 16px; border: 1px solid #d0d0d0; color: #222; }
.chips .light { color: #fff; }
.extra { grid-template-columns: 1fr 1fr; width: 40px; margin-left: 5px; padding-left: 4px; }
.statusbar { height: 21px; display: flex; align-items: center; background: linear-gradient(#dadada, #b2b2b2); }
.statusbar label { display: flex; align-items: center; margin-right: 2px; }
.xy { margin-left: 8px; }
.bounds { margin-left: 13px; }
.progress { margin-left: auto; margin-right: 182px; width: 515px; height: 14px; background: #f2f2f2; }
.behind { height: 4px; margin: 0 136px 0 48px; background: #9a9a9a; display: flex; gap: 12px; padding-left: 11px; font-size: 4px; line-height: 4px; color: #333; }
</style>
